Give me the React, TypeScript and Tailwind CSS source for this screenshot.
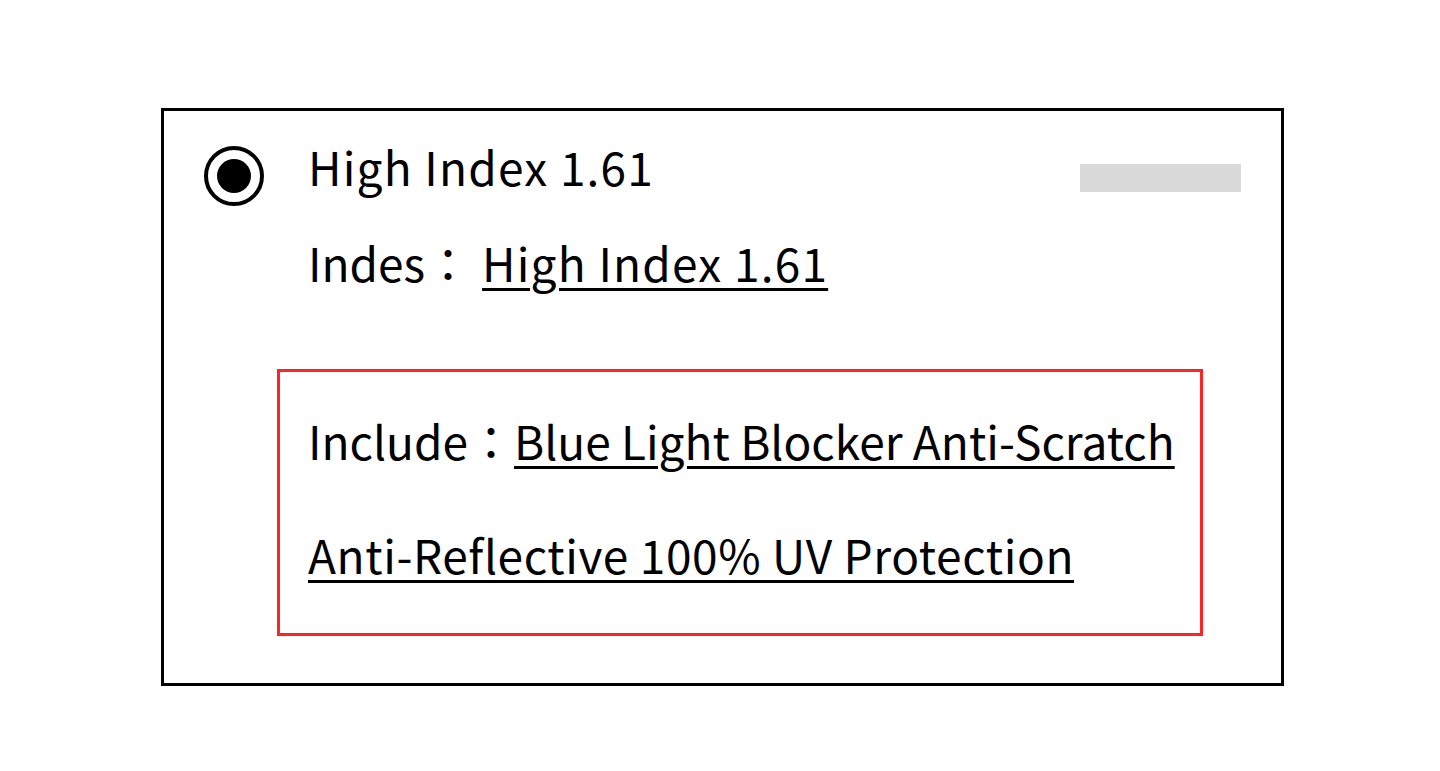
const font = { fontFamily: '"Noto Sans CJK JP", "Noto Sans", sans-serif' };

function Radio() {
  return (
    <span className="flex h-[60px] w-[60px] shrink-0 items-center justify-center rounded-full border-[4px] border-black">
      <span className="h-[34px] w-[34px] rounded-full bg-black" />
    </span>
  );
}

export default function App() {
  return (
    <div className="h-[771px] w-[1440px] bg-white pl-[161px] pt-[108px] text-black" style={font}>
      <div className="h-[578px] w-[1123px] border-[3px] border-black px-[40px]">
        <div className="mt-[35px] flex items-start">
          <Radio />
          <span className="-mt-[3px] ml-[44px] text-[46px] leading-none tracking-[1.2px]">High Index 1.61</span>
          <span className="ml-auto mt-[18px] h-[28px] w-[161px] bg-[#d9d9d9]" />
        </div>
        <div className="ml-[104px] mt-[33px] text-[46px] leading-none">
          Indes：
          <span className="ml-[11px] tracking-[1.2px] underline decoration-[3px] underline-offset-[6px]">High Index 1.61</span>
        </div>
        <div className="ml-[73px] mt-[84px] h-[267px] w-[926px] border-[3px] border-[#ff2323] pl-[28px] pt-[45px] text-[46px] leading-none">
          <div>
            Include：
            <span className="underline decoration-[3px] underline-offset-[6px]">Blue Light Blocker Anti-Scratch</span>
          </div>
          <div className="mt-[68px] tracking-[0.6px] underline decoration-[3px] underline-offset-[6px]">
            Anti-Reflective 100% UV Protection
          </div>
        </div>
      </div>
    </div>
  );
}
